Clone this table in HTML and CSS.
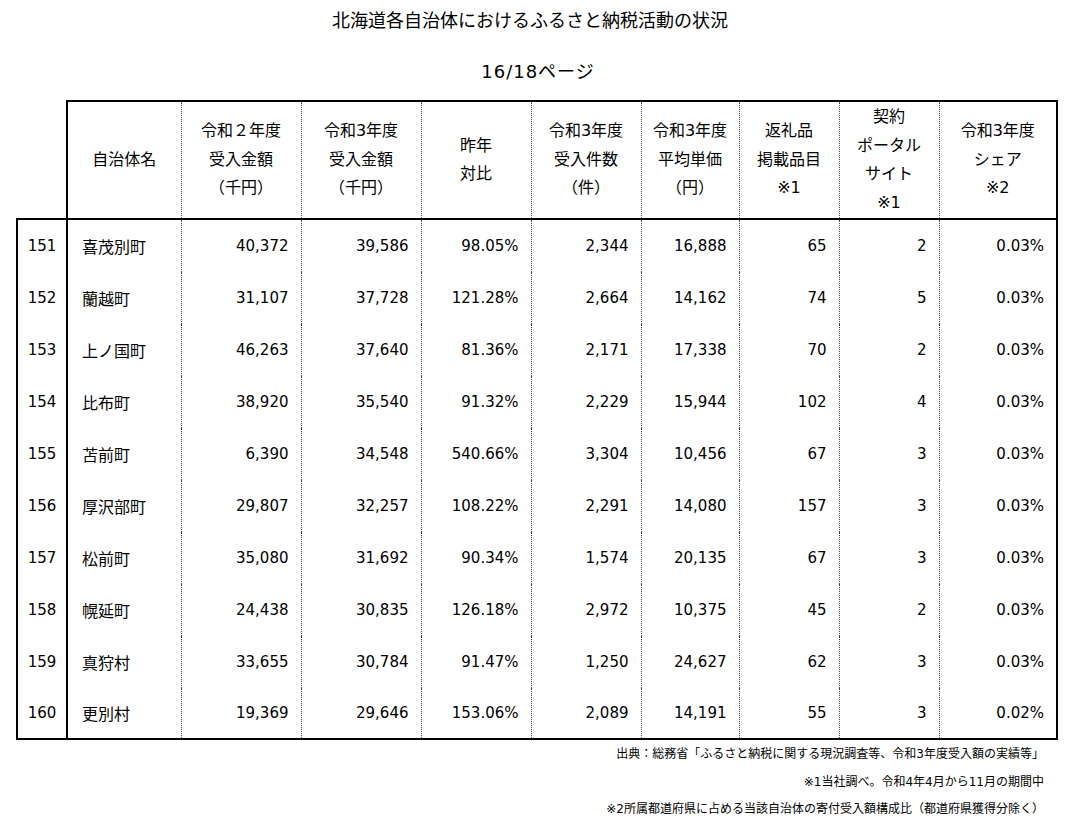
FILE: index.html
```html
<!DOCTYPE html>
<html lang="ja">
<head>
<meta charset="utf-8">
<title>北海道各自治体におけるふるさと納税活動の状況</title>
<link rel="stylesheet" href="styles.css">
</head>
<body>
<div class="page">
  <h1 class="title">北海道各自治体におけるふるさと納税活動の状況</h1>
  <p class="pageno">16/18ページ</p>
  <table class="data">
    <colgroup>
      <col class="c-no"><col class="c-name"><col class="c-120"><col class="c-120"><col class="c-110"><col class="c-110"><col class="c-98"><col class="c-100"><col class="c-100"><col class="c-118">
    </colgroup>
    <thead>
      <tr>
        <th class="corner"></th>
        <th>自治体名</th>
        <th>令和２年度<br>受入金額<br>（千円）</th>
        <th>令和3年度<br>受入金額<br>（千円）</th>
        <th>昨年<br>対比</th>
        <th>令和3年度<br>受入件数<br>（件）</th>
        <th>令和3年度<br>平均単価<br>（円）</th>
        <th>返礼品<br>掲載品目<br>※1</th>
        <th>契約<br>ポータル<br>サイト<br>※1</th>
        <th class="last">令和3年度<br>シェア<br>※2</th>
      </tr>
    </thead>
    <tbody>
      <tr><td class="no">151</td><td class="name">喜茂別町</td><td class="num">40,372</td><td class="num">39,586</td><td class="num">98.05%</td><td class="num">2,344</td><td class="num">16,888</td><td class="num">65</td><td class="num">2</td><td class="num last">0.03%</td></tr>
      <tr><td class="no">152</td><td class="name">蘭越町</td><td class="num">31,107</td><td class="num">37,728</td><td class="num">121.28%</td><td class="num">2,664</td><td class="num">14,162</td><td class="num">74</td><td class="num">5</td><td class="num last">0.03%</td></tr>
      <tr><td class="no">153</td><td class="name">上ノ国町</td><td class="num">46,263</td><td class="num">37,640</td><td class="num">81.36%</td><td class="num">2,171</td><td class="num">17,338</td><td class="num">70</td><td class="num">2</td><td class="num last">0.03%</td></tr>
      <tr><td class="no">154</td><td class="name">比布町</td><td class="num">38,920</td><td class="num">35,540</td><td class="num">91.32%</td><td class="num">2,229</td><td class="num">15,944</td><td class="num">102</td><td class="num">4</td><td class="num last">0.03%</td></tr>
      <tr><td class="no">155</td><td class="name">苫前町</td><td class="num">6,390</td><td class="num">34,548</td><td class="num">540.66%</td><td class="num">3,304</td><td class="num">10,456</td><td class="num">67</td><td class="num">3</td><td class="num last">0.03%</td></tr>
      <tr><td class="no">156</td><td class="name">厚沢部町</td><td class="num">29,807</td><td class="num">32,257</td><td class="num">108.22%</td><td class="num">2,291</td><td class="num">14,080</td><td class="num">157</td><td class="num">3</td><td class="num last">0.03%</td></tr>
      <tr><td class="no">157</td><td class="name">松前町</td><td class="num">35,080</td><td class="num">31,692</td><td class="num">90.34%</td><td class="num">1,574</td><td class="num">20,135</td><td class="num">67</td><td class="num">3</td><td class="num last">0.03%</td></tr>
      <tr><td class="no">158</td><td class="name">幌延町</td><td class="num">24,438</td><td class="num">30,835</td><td class="num">126.18%</td><td class="num">2,972</td><td class="num">10,375</td><td class="num">45</td><td class="num">2</td><td class="num last">0.03%</td></tr>
      <tr><td class="no">159</td><td class="name">真狩村</td><td class="num">33,655</td><td class="num">30,784</td><td class="num">91.47%</td><td class="num">1,250</td><td class="num">24,627</td><td class="num">62</td><td class="num">3</td><td class="num last">0.03%</td></tr>
      <tr class="lastrow"><td class="no">160</td><td class="name">更別村</td><td class="num">19,369</td><td class="num">29,646</td><td class="num">153.06%</td><td class="num">2,089</td><td class="num">14,191</td><td class="num">55</td><td class="num">3</td><td class="num last">0.02%</td></tr>
    </tbody>
  </table>
  <div class="notes">
    <p>出典：総務省「ふるさと納税に関する現況調査等、令和3年度受入額の実績等」</p>
    <p>※1当社調べ。令和4年4月から11月の期間中</p>
    <p>※2所属都道府県に占める当該自治体の寄付受入額構成比（都道府県獲得分除く）</p>
  </div>
</div>
</body>
</html>
```

FILE: styles.css
```css
html, body {
  margin: 0;
  padding: 0;
  background: #fff;
}
body {
  font-family: "DejaVu Sans", "Noto Sans CJK JP", sans-serif;
  color: #000;
}
.page {
  width: 1060px;
}
.title {
  margin: 0;
  padding-top: 9px;
  font-size: 18px;
  line-height: 24px;
  font-weight: normal;
  text-align: center;
}
.pageno {
  margin: 27px 0 0;
  padding-left: 16px;
  font-size: 18px;
  line-height: 24px;
  letter-spacing: 1px;
  text-align: center;
}
.data {
  margin: 16px 0 0 16px;
  border-collapse: collapse;
  table-layout: fixed;
  width: 1042px;
}
.c-no { width: 50px; }
.c-name { width: 114px; }
.c-120 { width: 120px; }
.c-110 { width: 110px; }
.c-98 { width: 98px; }
.c-100 { width: 100px; }
.c-118 { width: 118px; }

.data th {
  height: 116px;
  padding: 0;
  font-size: 16px;
  line-height: 28.5px;
  font-weight: normal;
  text-align: center;
  vertical-align: middle;
  border-top: 2px solid #000;
  border-bottom: 2px solid #000;
  border-left: 1px dotted #444;
  border-right: 1px dotted #444;
}
.data th.corner {
  border: none;
}
.data thead th:nth-child(2) {
  border-left: 2px solid #000;
}
.data .last {
  border-right: 2px solid #000;
}
.data td {
  height: 52px;
  padding: 0;
  vertical-align: middle;
  border-left: 1px dotted #444;
  border-right: 1px dotted #444;
}
.data tbody tr:first-child td {
  border-top: 2px solid #000;
}
.data td.no {
  font-size: 15px;
  text-align: center;
  border-left: 2px solid #000;
  border-right: 2px solid #000;
}
.data td.name {
  font-size: 16px;
  padding-left: 14px;
  text-align: left;
}
.data td.num {
  font-size: 15px;
  padding-right: 12px;
  text-align: right;
}
.data td.last {
  border-right: 2px solid #000;
}
.data .lastrow td {
  height: 50px;
  border-bottom: 2px solid #000;
}
.notes {
  display: flex;
  flex-direction: column;
  align-items: flex-end;
  gap: 7.5px;
  margin-top: 4px;
  padding-right: 16px;
}
.notes p {
  margin: 0;
  font-size: 12px;
  line-height: 20px;
}
```
